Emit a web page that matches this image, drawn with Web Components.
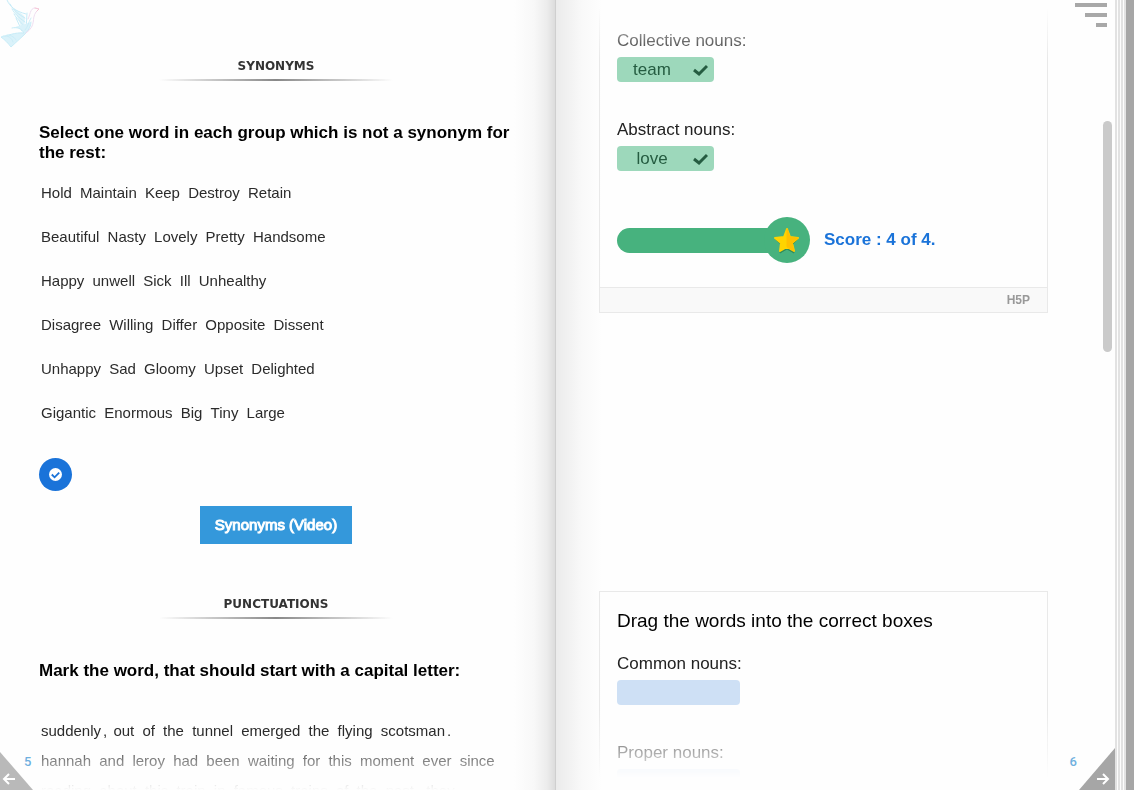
<!DOCTYPE html>
<html lang="en">
<head>
<meta charset="utf-8">
<meta name="viewport" content="width=device-width, initial-scale=1">
<title>English workbook</title>
<style>
  body { margin: 0; background: #a6a6a6; font-family: "Liberation Sans", Arial, sans-serif; color: #000; }
</style>
</head>
<body>
<flip-book>
  <book-page slot="left" side="left" number="5">
    <section-title>SYNONYMS</section-title>
    <task-heading>Select one word in each group which is not a synonym for the rest:</task-heading>
    <word-list>
      <mark-words words="Hold Maintain Keep Destroy Retain"></mark-words>
      <mark-words words="Beautiful Nasty Lovely Pretty Handsome"></mark-words>
      <mark-words words="Happy unwell Sick Ill Unhealthy"></mark-words>
      <mark-words words="Disagree Willing Differ Opposite Dissent"></mark-words>
      <mark-words words="Unhappy Sad Gloomy Upset Delighted"></mark-words>
      <mark-words words="Gigantic Enormous Big Tiny Large"></mark-words>
    </word-list>
    <check-button></check-button>
    <video-link href="#video">Synonyms (Video)</video-link>
    <section-title>PUNCTUATIONS</section-title>
    <task-heading>Mark the word, that should start with a capital letter:</task-heading>
    <mark-words class="passage" words="suddenly, out of the tunnel emerged the flying scotsman. hannah and leroy had been waiting for this moment ever since reading about this train in famous trains of the past, they"></mark-words>
  </book-page>

  <book-page slot="right" side="right" number="6">
    <exercise-card continued footer>
      <drop-zone label="Collective nouns:" answer="team"></drop-zone>
      <drop-zone label="Abstract nouns:" answer="love"></drop-zone>
      <score-bar>Score : 4 of 4.</score-bar>
    </exercise-card>
    <exercise-card heading="Drag the words into the correct boxes">
      <drop-zone label="Common nouns:"></drop-zone>
      <drop-zone label="Proper nouns:"></drop-zone>
    </exercise-card>
  </book-page>
</flip-book>

<script>
const define = (name, render) => customElements.define(name, class extends HTMLElement {
  connectedCallback() {
    if (this.shadowRoot) return;
    this.attachShadow({ mode: "open" }).innerHTML = render(this);
  }
});

define("flip-book", () => `
  <style>
    :host { display: grid; grid-template-columns: 556fr 559fr 11px 8px; height: 100vh; overflow: hidden; position: relative; }
    .edges { background: repeating-linear-gradient(to right, #e2e2e2 0 2px, #fdfdfd 2px 3px); }
    .logo { position: absolute; left: 0; top: 0; opacity: 0.8; }
    .menu { position: absolute; right: 27px; top: 3px; display: flex; flex-direction: column; align-items: flex-end; gap: 6px;
      padding: 0; border: 0; background: none; cursor: pointer; }
    .menu i { display: block; height: 4px; background: #a8a8a8; }
    .menu i:nth-child(1) { width: 32px; } .menu i:nth-child(2) { width: 22px; } .menu i:nth-child(3) { width: 11px; }
    .thumb { position: absolute; right: 22px; top: 121px; width: 9px; height: 231px; border-radius: 5px; background: #cacaca; }
  </style>
  <slot name="left"></slot>
  <slot name="right"></slot>
  <div class="edges"></div>
  <svg class="logo" width="42" height="50" viewBox="0 0 42 50" fill="none" stroke-linecap="round" aria-hidden="true">
    <path d="M8 0C10 6 15 9 19 12C22 14 24 15 25 18L24 31L21 27C19 19 14 10 8 0Z" fill="#d9f2fa"/>
    <path d="M7 0C10 7 15 11 26 14M10 4C14 11 18 14 25 18M12 9C15 14 18 17 25 22M14 14C17 19 19 20 24 26M27 13L26 32M16 18L22 31" stroke="#b9e7f6"/>
    <path d="M12 28C17 27 21 28 24 33C15 32 7 36 1 37C5 40 8 43 11 47L25 34C29 30 31 26 31 22" fill="#d2f0fa" stroke="#bae7f5"/>
    <path d="M3 36C8 35 12 38 13 42M7 35C12 35 15 38 16 40M25 30C28 27 28 23 31 18" stroke="#bfe9f6"/>
    <path d="M28 19C30 16 30 8 35 8L39 9L36 12C31 19 37 25 26 33" stroke="#ead5ec"/>
    <path d="M35 8L39 9L37 11" stroke="#f6b9cb"/>
  </svg>
  <button class="menu" aria-label="Menu"><i></i><i></i><i></i></button>
  <div class="thumb"></div>`);

define("book-page", el => {
  const left = el.getAttribute("side") === "left";
  return `
  <style>
    :host { display: block; position: relative; min-width: 0; height: 100vh; overflow: hidden; }
    :host([side="left"]) { background: linear-gradient(to left, #cfcfcf 0, #cfcfcf 1px, #dcdcdc 1px, #ececec 9px, #f8f8f8 22px, #fefefe 42px); }
    :host([side="right"]) { background: linear-gradient(to right, #ebebeb 0, #f1f1f1 12px, #f9f9f9 26px, #fefefe 46px); }
    .content { height: 100%; box-sizing: border-box; display: flex; flex-direction: column; overflow: hidden; }
    :host([side="left"]) .content { padding: 58px 43px 0 39px;
      mask-image: linear-gradient(to bottom, #000 calc(100% - 50px), transparent 100%); }
    :host([side="right"]) .content { padding: 0 67px 0 43px; gap: 278px;
      mask-image: linear-gradient(to bottom, transparent 8px, #000 58px, #000 calc(100% - 80px), transparent calc(100% - 12px)); }
    ::slotted(*) { flex: none; }
    .number { position: absolute; bottom: 20px; font: 500 13px/16px Roboto, sans-serif; color: #6fb0df; }
    .turn { position: absolute; bottom: 0; width: 36px; height: 42px; }
    .turn svg { display: block; }
    :host([side="left"]) .number { left: 24px; }
    :host([side="left"]) .turn { left: 0; }
    :host([side="right"]) .number { right: 38px; }
    :host([side="right"]) .turn { right: 0; }
  </style>
  <div class="content"><slot></slot></div>
  <span class="number">${el.getAttribute("number")}</span>
  <a class="turn" href="#${left ? "previous" : "next"}" aria-label="${left ? "Previous page" : "Next page"}">
    <svg width="36" height="42" viewBox="0 0 36 42" fill="none">
      ${left
        ? `<path d="M0 4L33 42H0Z" fill="#b9b9b9"/><path d="M15 31H5M9 26L4 31L9 36" stroke="#fff" stroke-width="2"/>`
        : `<path d="M36 0V42H0Z" fill="#a6a6a6"/><path d="M18 31H28M24 26L29 31L24 36" stroke="#fff" stroke-width="2"/>`}
    </svg>
  </a>`;
});

define("section-title", () => `
  <style>
    :host { display: flex; flex-direction: column; align-items: center; gap: 5px; margin-bottom: 42px; }
    h2 { margin: 0; font: bold 12px/16px "DejaVu Sans", Verdana, sans-serif; color: #333; }
    .rule { width: 234px; height: 2px; background: linear-gradient(to right, transparent, #888, transparent); }
  </style>
  <h2><slot></slot></h2><div class="rule"></div>`);

define("task-heading", () => `
  <style>
    :host { display: block; }
    h3 { margin: 0; font-size: 17px; line-height: 20px; font-weight: bold; }
  </style>
  <h3><slot></slot></h3>`);

define("word-list", () => `
  <style>
    :host { display: flex; flex-direction: column; gap: 24px; margin: 20px 0 35px; }
  </style>
  <slot></slot>`);

define("mark-words", el => `
  <style>
    :host { display: block; font-size: 15px; line-height: 20px; color: #2b2b2b; }
    :host(.passage) { margin: 35px 10px 0 0; line-height: 30px; }
    p { margin: 0; }
    span { padding: 0 2px; cursor: pointer; }
  </style>
  <p>${el.getAttribute("words").replace(/([a-z]+)/gi, "<span>$1</span>")}</p>`);

define("check-button", () => `
  <style>
    :host { display: block; margin-bottom: 15px; }
    button { display: flex; align-items: center; justify-content: center; width: 33px; height: 33px; padding: 0;
      border: 0; border-radius: 50%; background: #1a73d9; cursor: pointer; }
  </style>
  <button aria-label="Check">
    <svg width="13" height="13" viewBox="0 0 14 14" fill="none"><circle cx="7" cy="7" r="7" fill="#fff"/>
    <path d="M3 7L6 10L11 5" stroke="#1a73d9" stroke-width="2"/></svg>
  </button>`);

define("video-link", el => `
  <style>
    :host { display: flex; justify-content: center; margin-bottom: 52px; }
    a { padding: 9px 15px; background: #3498db; color: #fff; font-size: 15px; line-height: 20px; text-decoration: none;
      -webkit-text-stroke: 1px #fff; }
  </style>
  <a href="${el.getAttribute("href")}"><slot></slot></a>`);

define("exercise-card", el => `
  <style>
    :host { display: block; border: 1px solid #e9e9e9; box-sizing: border-box; }
    :host([continued]) { border-top: 0; }
    .body { display: flex; flex-direction: column; gap: 38px; padding: 17px 17px 24px; }
    :host([continued]) .body { padding-top: 31px; }
    h3 { margin: 0 0 -17px; font-size: 19px; line-height: 24px; font-weight: normal; }
    footer { display: flex; justify-content: flex-end; padding: 0 17px; border-top: 1px solid #e9e9e9; background: #f9f9f9;
      font-size: 12px; line-height: 24px; font-weight: bold; color: #999; }
  </style>
  <div class="body">
    ${el.hasAttribute("heading") ? `<h3>${el.getAttribute("heading")}</h3>` : ""}
    <slot></slot>
  </div>
  ${el.hasAttribute("footer") ? "<footer>H5P</footer>" : ""}`);

define("drop-zone", el => {
  const answer = el.getAttribute("answer");
  return `
  <style>
    :host { display: flex; flex-direction: column; align-items: flex-start; gap: 6px; font-size: 17px; line-height: 20px; color: #222; }
    .zone { width: 123px; height: 25px; border-radius: 4px; background: #cee0f5; }
    .zone.correct { display: flex; align-items: center; width: 97px; background: #9dd8bb; color: #255c41; }
    .zone span { flex: 1; text-align: center; }
    svg { margin: 0 6px; }
  </style>
  <div>${el.getAttribute("label")}</div>
  ${answer
    ? `<div class="zone correct"><span>${answer}</span>
        <svg width="15" height="13" viewBox="0 0 15 13" fill="none"><path d="M1 7L6 11L14 3" stroke="#255c41" stroke-width="3"/></svg></div>`
    : `<div class="zone"></div>`}`;
});

define("score-bar", () => `
  <style>
    :host { display: flex; align-items: center; margin-top: 8px; font-size: 17px; line-height: 20px; font-weight: bold; color: #1a73d9; }
    .bar { width: 170px; height: 25px; border-radius: 13px; background: #47b27e; }
    .star { display: flex; align-items: center; justify-content: center; width: 46px; height: 46px; margin: 0 14px 0 -23px;
      border-radius: 50%; background: #47b27e; }
  </style>
  <div class="bar"></div>
  <div class="star">
    <svg width="28" height="28" viewBox="0 0 28 28" stroke-linejoin="round">
      <path d="M14 4L17 11L25 12L19 18L21 26L14 22L7 26L9 18L2 12L11 11Z" fill="#2f8a5d" stroke="#2f8a5d" transform="translate(0 1)"/>
      <path d="M14 3L17 11L25 12L19 17L21 25L14 21L7 25L8 17L2 12L11 11Z" fill="#ffd400" stroke="#ffd400" stroke-width="2"/>
      <path d="M14 3L17 11L25 12L19 17L21 25L14 21Z" fill="#ffc000" stroke="#ffc000"/>
    </svg>
  </div>
  <slot></slot>`);
</script>
</body>
</html>
